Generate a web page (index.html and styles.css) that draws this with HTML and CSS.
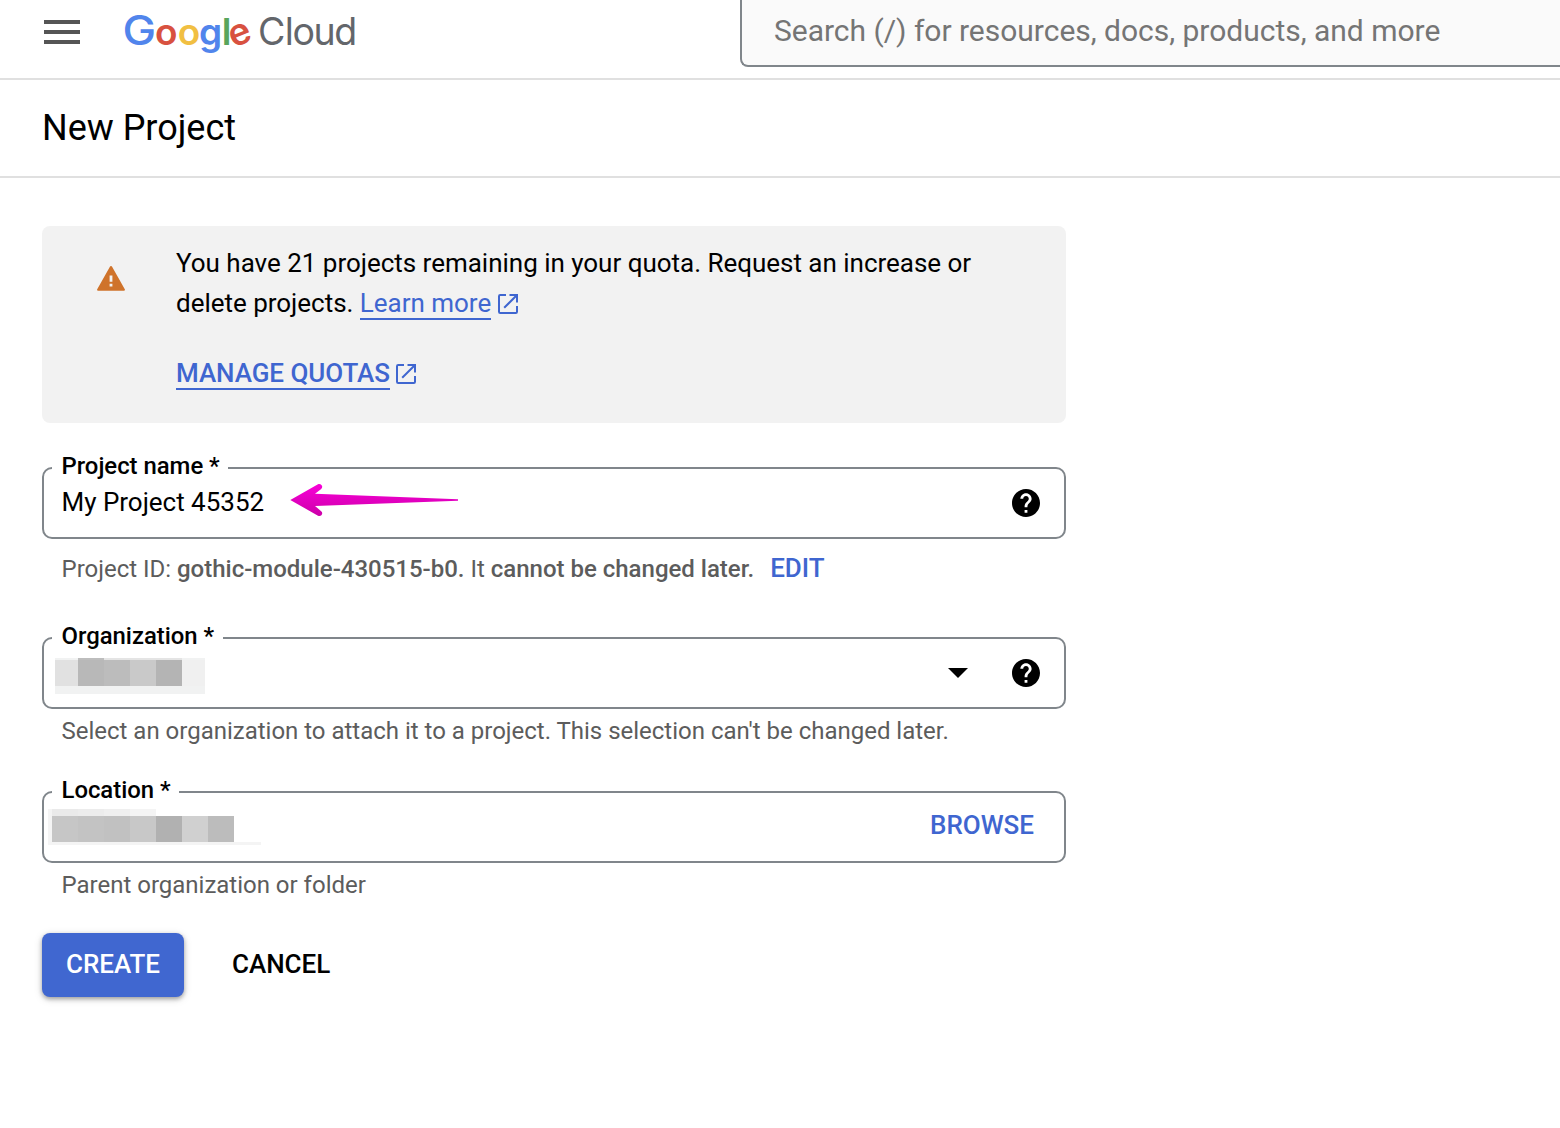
FILE: index.html
```html
<!DOCTYPE html>
<html lang="en">
<head>
<meta charset="utf-8">
<title>New Project – Google Cloud</title>
<link rel="stylesheet" href="styles.css">
</head>
<body>
<header class="topbar">
  <button class="menu" aria-label="Main menu"><span></span><span></span><span></span></button>
  <svg class="logo" width="240" height="56" viewBox="120 4 240 56" role="img" aria-label="Google Cloud">
    <g class="logo-google">
      <text class="logo-cap" transform="translate(122.400 43.600) scale(1.110 1)" fill="#5185ec">G</text>
      <text y="43.600" x="155.100" fill="#d85140">o</text>
      <text y="43.600" x="177.800" fill="#f1bf42">o</text>
      <text y="43.600" x="199.100" fill="#5185ec">g</text>
      <text y="43.600" x="221.700" fill="#58a55c">l</text>
      <text y="43.600" x="229" transform="rotate(-22 240 33.800)" fill="#d85140">e</text>
    </g>
    <text class="logo-cloud" y="43.600" x="257.900 284.800 292.600 313.600 334.200">Cloud</text>
  </svg>
  <div class="search">Search (/) for resources, docs, products, and more</div>
</header>
<div class="titlebar"><h1>New Project</h1></div>
<main class="page">
  <section class="notice">
    <svg class="warn" width="28" height="25" viewBox="0 0 28 25"><path d="M12.900.8a1.200 1.200 0 0 1 2.200 0L27.800 23.300a.9.9 0 0 1-.8 1.400H1a.9.9 0 0 1-.8-1.400z" fill="#cf732b"/><path d="M12.600 9.400h2.800v6.400h-2.800zM12.600 17.800h2.800v2.800h-2.800z" fill="#f2f2f2"/></svg>
    <div class="notice-body">
      <p>You have 21 projects remaining in your quota. Request an increase or<br>delete projects. <a class="link learn">Learn more</a><svg class="ext" width="20" height="20" viewBox="0 0 20 20"><path d="M8 1H2.200Q1 1 1 2.200v15.600Q1 19 2.200 19h15.600q1.200 0 1.200-1.200V12M11.500 1H19v7.500M19 1 6.200 13.800"/></svg></p>
      <p class="manage-row"><a class="link manage">MANAGE QUOTAS</a><svg class="ext" width="20" height="20" viewBox="0 0 20 20"><path d="M8 1H2.200Q1 1 1 2.200v15.600Q1 19 2.200 19h15.600q1.200 0 1.200-1.200V12M11.500 1H19v7.500M19 1 6.200 13.800"/></svg></p>
    </div>
  </section>

  <fieldset class="field">
    <legend>Project name *</legend>
    <div class="control">
      <span class="value">My Project 45352</span>
      <svg class="arrow" width="170" height="34" viewBox="0 0 170 34"><defs><linearGradient id="pink" x1="0" y1="0" x2="0" y2="1"><stop offset="0" stop-color="#f900d8"/><stop offset="1" stop-color="#cc00a8"/></linearGradient></defs><path d="M.3 17 28 1.300c3-1.500 5.800 2.500 3.200 4.600L25 10.800 168 16.300v1.400L25 23l6.200 5.200c2.600 2.200-.2 6-3.200 4.500z" fill="url(#pink)"/></svg>
      <svg class="help" width="28" height="28" viewBox="2 2 20 20"><path d="M12 2C6.480 2 2 6.480 2 12s4.480 10 10 10 10-4.480 10-10S17.520 2 12 2zm1 17h-2v-2h2v2zm2.070-7.750-.9.920C13.450 12.900 13 13.500 13 15h-2v-.5c0-1.100.45-2.100 1.170-2.830l1.240-1.260c.37-.36.59-.86.59-1.410 0-1.100-.9-2-2-2s-2 .9-2 2H8c0-2.210 1.790-4 4-4s4 1.790 4 4c0 .88-.36 1.680-.93 2.250z"/></svg>
    </div>
  </fieldset>
  <p class="hint hint-id"><span>Project ID: <b>gothic-module-430515-b0.</b> It <b>cannot be changed later.</b></span><a class="edit">EDIT</a></p>

  <fieldset class="field">
    <legend>Organization *</legend>
    <div class="control">
      <svg class="redacted-org" width="150" height="36" shape-rendering="crispEdges"><path fill="#f1f2f2" d="M0 0h150v36H0z"/><path fill="#e4e4e4" d="M49 0h78v2H49z"/><path fill="#bdbdbd" d="M23 0h26v2H23z"/><path fill="#e1e1e1" d="M0 2h23v26H0z"/><path fill="#b8b8b8" d="M23 2h26v26H23z"/><path fill="#bcbcbc" d="M49 2h26v26H49z"/><path fill="#c9c9c9" d="M75 2h26v26H75z"/><path fill="#b4b4b4" d="M101 2h26v26h-26z"/><path fill="#f0f0f0" d="M127 2h23v26h-23z"/></svg>
      <svg class="caret" width="20" height="10" viewBox="0 0 20 10"><path d="M0 0h20L10 10z"/></svg>
      <svg class="help" width="28" height="28" viewBox="2 2 20 20"><path d="M12 2C6.480 2 2 6.480 2 12s4.480 10 10 10 10-4.480 10-10S17.520 2 12 2zm1 17h-2v-2h2v2zm2.070-7.750-.9.920C13.450 12.900 13 13.500 13 15h-2v-.5c0-1.100.45-2.100 1.170-2.830l1.240-1.260c.37-.36.59-.86.59-1.410 0-1.100-.9-2-2-2s-2 .9-2 2H8c0-2.210 1.790-4 4-4s4 1.790 4 4c0 .88-.36 1.680-.93 2.250z"/></svg>
    </div>
  </fieldset>
  <p class="hint hint-org">Select an organization to attach it to a project. This selection can't be changed later.</p>

  <fieldset class="field">
    <legend>Location *</legend>
    <div class="control">
      <svg class="redacted-loc" width="213" height="36" shape-rendering="crispEdges"><path fill="#f4f4f4" d="M0 0h108v7H4v26h209v3H0z"/><path fill="#eaeaea" d="M4 0h26v7H4z"/><path fill="#ececec" d="M30 0h26v7H30z"/><path fill="#efefef" d="M56 0h26v7H56z"/><path fill="#c6c6c6" d="M4 7h26v26H4z"/><path fill="#c3c3c3" d="M30 7h26v26H30z"/><path fill="#c1c1c1" d="M56 7h26v26H56z"/><path fill="#c8c8c8" d="M82 7h26v26H82z"/><path fill="#b1b1b1" d="M108 7h26v26h-26z"/><path fill="#d0d0d0" d="M134 7h26v26h-26z"/><path fill="#bcbcbc" d="M160 7h26v26h-26z"/></svg>
      <a class="browse">BROWSE</a>
    </div>
  </fieldset>
  <p class="hint hint-loc">Parent organization or folder</p>

  <div class="actions">
    <button class="create">CREATE</button>
    <button class="cancel">CANCEL</button>
  </div>
</main>
</body>
</html>
```
FILE: styles.css
```css
* { box-sizing: border-box; }
body {
  margin: 0;
  width: 1560px;
  height: 1128px;
  overflow: hidden;
  background: #fff;
  color: #000;
  font-family: Roboto, "Liberation Sans", sans-serif;
  font-size: 26px;
  letter-spacing: -0.018px;
}
p, h1 { margin: 0; }
svg { display: block; flex: none; }
button { border: 0; padding: 0; background: none; font: inherit; color: inherit; letter-spacing: inherit; }

.topbar {
  display: flex;
  height: 80px;
  border-bottom: 2px solid #e0e0e0;
}
.menu {
  display: flex;
  flex-direction: column;
  gap: 6px;
  width: 36px;
  margin: 20px 40px 0 44px;
}
.menu span { height: 4px; background: #555; }
.logo { margin-top: 5px; }
.logo text { font-family: Inter, sans-serif; letter-spacing: 0; }
.logo-google text { font-size: 37px; font-weight: 600; }
.logo-google .logo-cap { font-size: 40.5px; font-weight: 500; }
.logo .logo-cloud { font-size: 37.5px; fill: #63666b; }
.search {
  width: 820px;
  height: 67px;
  margin-left: 380px;
  padding: 13px 0 0 32px;
  border: solid #80868b;
  border-width: 0 0 2px 2px;
  border-bottom-left-radius: 8px;
  background: #fafafa;
  color: #757575;
  font-size: 30px;
  line-height: 36px;
  white-space: nowrap;
}

.titlebar {
  display: flex;
  align-items: center;
  height: 98px;
  padding-left: 42px;
  border-bottom: 2px solid #e0e0e0;
}
.titlebar h1 { font-size: 36px; font-weight: 400; line-height: 48px; }

.page { width: 1024px; margin: 48px 0 0 42px; }
.notice {
  display: flex;
  height: 197px;
  border-radius: 8px;
  background: #f2f2f2;
}
.warn { margin: 40px 51.500px 0 54.500px; }
.notice-body { padding-top: 17px; line-height: 40px; white-space: nowrap; }
.link { color: #3f66d0; border-bottom: 2px solid #3f66d0; }
.ext {
  display: inline-block;
  margin-left: 7px;
  vertical-align: -2px;
  fill: none;
  stroke: #3f66d0;
  stroke-width: 2;
}
.manage-row { margin-top: 30px; }
.manage-row .ext { margin-left: 6px; }
.manage { font-weight: 500; letter-spacing: -0.06px; }

.field {
  height: 83px;
  margin: 33px 0 0;
  padding: 0 0 0 8px;
  border: 2px solid #80868b;
  border-radius: 10px;
  min-width: 0;
}
.field legend {
  height: 24px;
  padding: 0 8.500px 0 9.500px;
  font-size: 23.9px;
  font-weight: 500;
  line-height: 20px;
}
.control { display: flex; height: 57px; padding: 0 24px 0 10px; }
.value { line-height: 30px; margin: 7px 0 0 -0.5px; }
.arrow { margin: 3px 0 0 26px; }
.help { margin: 9px 0 0 44px; }
.control .arrow + .help { margin-left: auto; }
.caret { margin: 18px 0 0 auto; }
.redacted-org { margin: 8px 0 0 -7px; }
.redacted-loc { margin: 5px 0 0 -14px; }
.browse { margin: 6px 6px 0 auto; line-height: 30px; font-weight: 500; color: #3f66d0; }

.hint {
  display: flex;
  height: 54px;
  padding: 16px 0 0 19.500px;
  color: #5c5c5c;
  font-size: 24px;
  line-height: 28px;
  letter-spacing: -0.008px;
  white-space: nowrap;
}
.hint b { font-weight: 500; }
.edit { margin-left: 16px; font-size: 26px; font-weight: 500; line-height: 26px; color: #3f66d0; }
.hint-org, .hint-loc { height: 38px; padding-top: 8px; }

.actions { display: flex; margin-top: 32px; }
.create, .cancel { height: 64px; padding-bottom: 2px; font-weight: 500; }
.create {
  width: 142px;
  border-radius: 8px;
  background: #4067d0;
  color: #fff;
  box-shadow: 0 2px 4px rgba(0,0,0,.3), 0 2px 8px rgba(0,0,0,.15);
}
.cancel { margin-left: 48px; }
```
